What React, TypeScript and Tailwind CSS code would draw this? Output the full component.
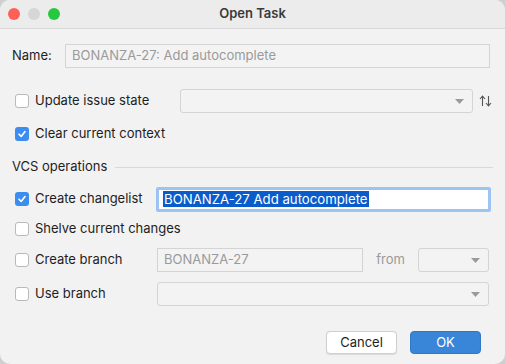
import React from "react";

const font = { fontFamily: "Inter, 'Noto Sans', sans-serif" };

function Checkbox({ checked = false }: { checked?: boolean }) {
  if (checked) {
    return (
      <div className="w-[14px] h-[14px] rounded-[3px] bg-[#3b8ef0] flex items-center justify-center shrink-0">
        <svg width="10" height="10" viewBox="0 0 10 10">
          <path d="M2 5.2 L4.2 7.4 L8 2.6" fill="none" stroke="white" strokeWidth="1.6" strokeLinecap="round" strokeLinejoin="round" />
        </svg>
      </div>
    );
  }
  return <div className="w-[14px] h-[14px] rounded-[3px] bg-white border border-[#b9b9b9] shrink-0" />;
}

function Arrow() {
  return (
    <svg width="9" height="5" viewBox="0 0 9 5" className="shrink-0">
      <path d="M0 0 L9 0 L4.5 5 Z" fill="#9a9a9a" />
    </svg>
  );
}

// sort icon: up arrow + down arrow
function SortIcon() {
  return (
    <svg width="13" height="12" viewBox="0 0 13 12" className="shrink-0">
      <path d="M3.5 11 V1.5 M1 4 L3.5 1.2 L6 4" fill="none" stroke="#555" strokeWidth="1.1" />
      <path d="M9.5 1 V10.5 M7 8 L9.5 10.8 L12 8" fill="none" stroke="#555" strokeWidth="1.1" />
    </svg>
  );
}

function Combo({ className }: { className: string }) {
  return (
    <div className={`h-[24px] rounded-[3px] border border-[#d4d4d4] bg-[#f3f3f3] flex items-center justify-end pr-[8px] ${className}`}>
      <Arrow />
    </div>
  );
}

function CheckRow({ label, checked, children, className = "" }: { label: string; checked?: boolean; children?: React.ReactNode; className?: string }) {
  return (
    <div className={`flex items-center h-[24px] ${className}`}>
      <div className="flex items-center gap-[6px] w-[142px] pl-[3px] shrink-0">
        <Checkbox checked={checked} />
        <span className="text-[13px] text-[#1e1e1e] whitespace-nowrap">{label}</span>
      </div>
      {children}
    </div>
  );
}

export default function App() {
  return (
    <div className="w-[505px] h-[364px] bg-[#cfcfcf]" style={font}>
      <div className="w-[505px] h-[364px] rounded-[10px] overflow-hidden bg-[#f2f2f2] flex flex-col">
        {/* title bar */}
        <div className="relative h-[29px] bg-[#ececec] border-b border-[#d9d9d9] flex items-center shrink-0">
          <div className="flex items-center gap-[8px] pl-[8px]">
            <div className="w-[12px] h-[12px] rounded-full bg-[#fe5f57]" />
            <div className="w-[12px] h-[12px] rounded-full bg-[#d6d6d6]" />
            <div className="w-[12px] h-[12px] rounded-full bg-[#27c840]" />
          </div>
          <div className="absolute inset-0 flex items-center justify-center text-[13px] font-semibold text-[#3a3a3a]">
            Open Task
          </div>
        </div>

        <div className="flex flex-col px-[12px] pt-[15px] grow">
          {/* name */}
          <div className="flex items-center h-[24px]">
            <span className="w-[53px] text-[13px] text-[#1e1e1e]">Name:</span>
            <div className="w-[425px] h-[24px] border border-[#d4d4d4] bg-[#f3f3f3] flex items-center px-[6px] text-[13px] text-[#9a9a9a]">
              BONANZA-27: Add autocomplete
            </div>
          </div>

          <CheckRow label="Update issue state" className="mt-[21px]">
            <div className="w-[26px]" />
            <Combo className="w-[293px]" />
            <div className="ml-[6px]">
              <SortIcon />
            </div>
          </CheckRow>

          <CheckRow label="Clear current context" checked className="mt-[9px]" />

          <div className="flex items-center h-[24px] mt-[9px]">
            <span className="text-[13px] text-[#1e1e1e] whitespace-nowrap">VCS operations</span>
            <div className="ml-[8px] h-px bg-[#d9d9d9] grow" />
          </div>

          <CheckRow label="Create changelist" checked className="mt-[8px]">
            <div className="w-[2px]" />
            <div className="w-[335px] h-[25px] rounded-[2px] border-[3px] border-[#9cc3f1] bg-white flex items-center pl-[4px]">
              <span className="bg-[#0b5ccb] text-white text-[13.2px] leading-[16px] px-[1px] whitespace-nowrap">
                BONANZA-27 Add autocomplete
              </span>
            </div>
          </CheckRow>

          <CheckRow label="Shelve current changes" className="mt-[6px]" />

          <CheckRow label="Create branch" className="mt-[7px]">
            <div className="w-[3px]" />
            <div className="w-[206px] h-[24px] border border-[#d4d4d4] bg-[#f3f3f3] flex items-center px-[6px] text-[13px] text-[#9a9a9a]">
              BONANZA-27
            </div>
            <span className="w-[55px] text-center text-[13px] text-[#9a9a9a]">from</span>
            <Combo className="w-[71px]" />
          </CheckRow>

          <CheckRow label="Use branch" className="mt-[10px]">
            <div className="w-[3px]" />
            <Combo className="w-[332px]" />
          </CheckRow>

          <div className="flex justify-end gap-[13px] mt-[25px] pr-[12px]">
            <div className="w-[71px] h-[23px] rounded-[4px] bg-white border border-[#cfcfcf] shadow-[0_0.5px_1px_rgba(0,0,0,0.1)] flex items-center justify-center text-[13px] text-[#1e1e1e]">
              Cancel
            </div>
            <div className="w-[71px] h-[23px] rounded-[4px] bg-[#3985d8] border border-[#2f78c8] flex items-center justify-center text-[13px] text-white">
              OK
            </div>
          </div>
        </div>
      </div>
    </div>
  );
}
